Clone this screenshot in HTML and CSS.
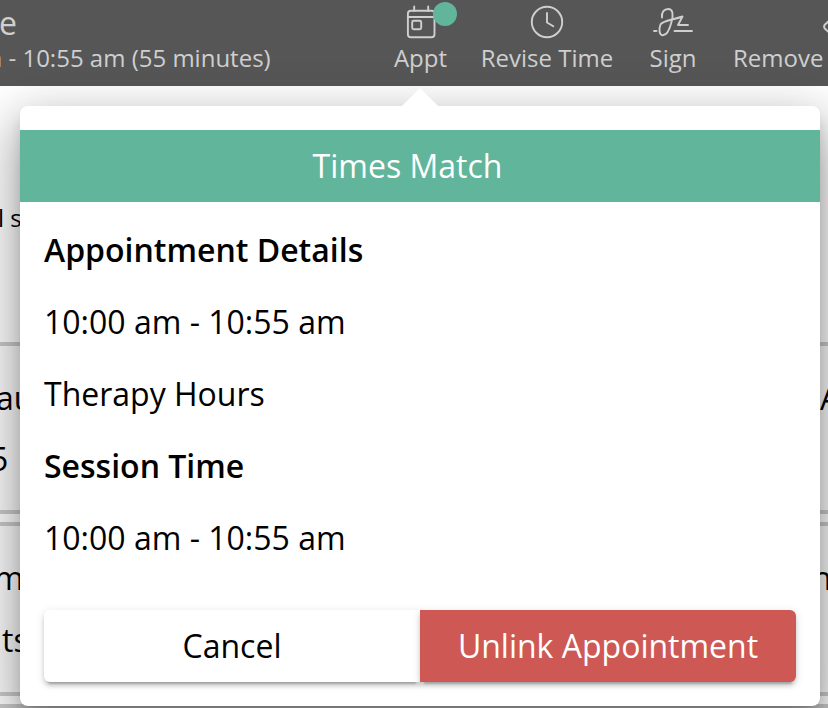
FILE: index.html
```html
<!DOCTYPE html>
<html lang="en">
<head>
<meta charset="utf-8">
<title>Session</title>
<link rel="stylesheet" href="styles.css">
</head>
<body>
<header class="toolbar">
  <div class="heading">
    <div class="title">e</div>
    <div class="subtitle"><span>m - 10:55 am (55 minutes)</span></div>
  </div>
  <nav class="actions">
    <button class="action appt">
      <svg class="icon" width="40" height="40" viewBox="0 0 40 40"><rect x="6.9" y="8.8" width="26.6" height="26.4" rx="3"/><path d="M7 15H33.5M13.2 9V4.5M27.2 9V4.5"/><rect x="11.2" y="18.8" width="9" height="8.4" rx="1.5"/></svg>
      <span>Appt</span>
      <i class="dot"></i>
    </button>
    <button class="action revise">
      <svg class="icon" width="40" height="40" viewBox="0 0 40 40"><circle cx="20" cy="20" r="15.2"/><path d="M20 11V20.5L26.3 24.2"/></svg>
      <span>Revise Time</span>
    </button>
    <button class="action sign">
      <svg class="icon" width="40" height="40" viewBox="0 0 40 40"><path d="M1 29H3.5M21.5 29H39M9 15.5C8.500 10 11 7 15.300 7C20 7 20.500 13 18.500 20C16.500 28 14 33.200 10 33.200C6 33.200 5.700 27 7.500 22.500C9.500 18.500 20 18 29.500 14.500L25 23H35"/></svg>
      <span>Sign</span>
    </button>
    <button class="action remove">
      <svg class="icon" width="40" height="40" viewBox="0 0 40 40"><path d="M23 19L19 22.500Q17.200 24.500 19 26.800L23 30.500"/></svg>
      <span>Remove</span>
    </button>
  </nav>
</header>
<main class="page">
  <section class="intro"><p class="note">l s</p></section>
  <section class="card">
    <div class="row"><span class="first">au</span><span class="last">A</span></div>
    <div class="row"><span class="second">5</span></div>
  </section>
  <section class="card tall">
    <div class="row"><span class="third">m</span><span class="last name">n</span></div>
    <div class="row"><span class="fourth">ts</span></div>
  </section>
  <section class="card"></section>
</main>
<div class="popover">
  <i class="arrow"></i>
  <div class="banner"><span>Times Match</span></div>
  <div class="details">
    <h2>Appointment Details</h2>
    <p>10:00 am - 10:55 am</p>
    <p>Therapy Hours</p>
    <h2>Session Time</h2>
    <p>10:00 am - 10:55 am</p>
  </div>
  <div class="buttons">
    <button class="cancel">Cancel</button>
    <button class="unlink">Unlink Appointment</button>
  </div>
</div>
</body>
</html>
```
FILE: styles.css
```css
* { box-sizing: border-box; }
html, body { margin: 0; height: 708px; overflow: hidden; }
body { position: relative; background: #fff; color: #000; font-family: "Open Sans", "Noto Sans", sans-serif; font-size: 32px; }
button { margin: 0; padding: 0; border: 0; background: none; color: inherit; font: inherit; }
.toolbar { display: flex; height: 86px; background: #565656; color: #cfcfcf; font-size: 24px; overflow: hidden; }
.heading { width: 380px; flex: none; }
.title { height: 42px; margin-left: -1px; font-size: 32px; line-height: 45px; }
.subtitle { height: 32px; margin-left: -20px; line-height: 32px; white-space: nowrap; }
.actions { display: flex; }
.action { position: relative; flex: none; display: flex; flex-direction: column; align-items: center; height: 86px; padding-top: 2px; white-space: nowrap; line-height: 32px; }
.appt { width: 81px; }
.revise { width: 172px; }
.sign { width: 80px; }
.remove { width: 130px; align-items: flex-start; padding-left: 20px; }
.remove .icon { margin-left: 73px; }
.icon { flex: none; fill: none; stroke: #cfcfcf; stroke-width: 1.9; stroke-linecap: round; stroke-linejoin: round; }
.dot { position: absolute; left: 53px; top: 2px; width: 24px; height: 24px; border-radius: 50%; background: #60b59b; }
.page { height: 622px; overflow: hidden; }
.intro { height: 256px; padding-top: 116px; }
.note { margin: 0 0 0 -2px; font-size: 24px; line-height: 32px; }
.card { height: 172px; margin-bottom: 8px; padding-top: 20px; border: solid #ccc; border-width: 4px 0; background: #fcfcfc; }
.tall { height: 174px; }
.row { display: flex; justify-content: space-between; height: 61px; line-height: 64px; }
.first { margin-left: -4px; }
.last { width: 8px; }
.name { width: 16px; }
.second { margin-left: -10px; }
.third { margin-left: -6px; }
.fourth { margin: 1px 0 0 2px; }
.popover { position: absolute; left: 20px; top: 106px; width: 800px; height: 600px; padding-top: 24px; border-radius: 8px; background: #fff; box-shadow: 0 10px 14px -4px rgba(0,0,0,.2), 0 32px 48px 4px rgba(0,0,0,.2), 0 12px 50px 8px rgba(0,0,0,.2); }
.arrow { position: absolute; left: 382px; top: -18px; width: 36px; height: 18px; background: #fff; clip-path: polygon(50% 0, 100% 100%, 0 100%); }
.banner { height: 72px; background: #60b59b; color: #fff; line-height: 72px; text-align: center; }
.banner span { margin-right: 25px; }
.details { padding: 12px 24px 0; }
.details h2, .details p { margin: 0; height: 72px; line-height: 72px; font-size: 32px; font-weight: 400; }
.details h2 { font-weight: 600; }
.buttons { display: flex; margin: 36px 24px 0; height: 72px; }
.buttons button { flex: 1; line-height: 72px; box-shadow: 0 6px 2px -4px rgba(0,0,0,.2), 0 4px 4px rgba(0,0,0,.14), 0 2px 10px rgba(0,0,0,.12); }
.cancel { background: #fff; border-radius: 6px 0 0 6px; }
.buttons .unlink { background: #cd5854; color: #fff; border-radius: 0 6px 6px 0; }
```
